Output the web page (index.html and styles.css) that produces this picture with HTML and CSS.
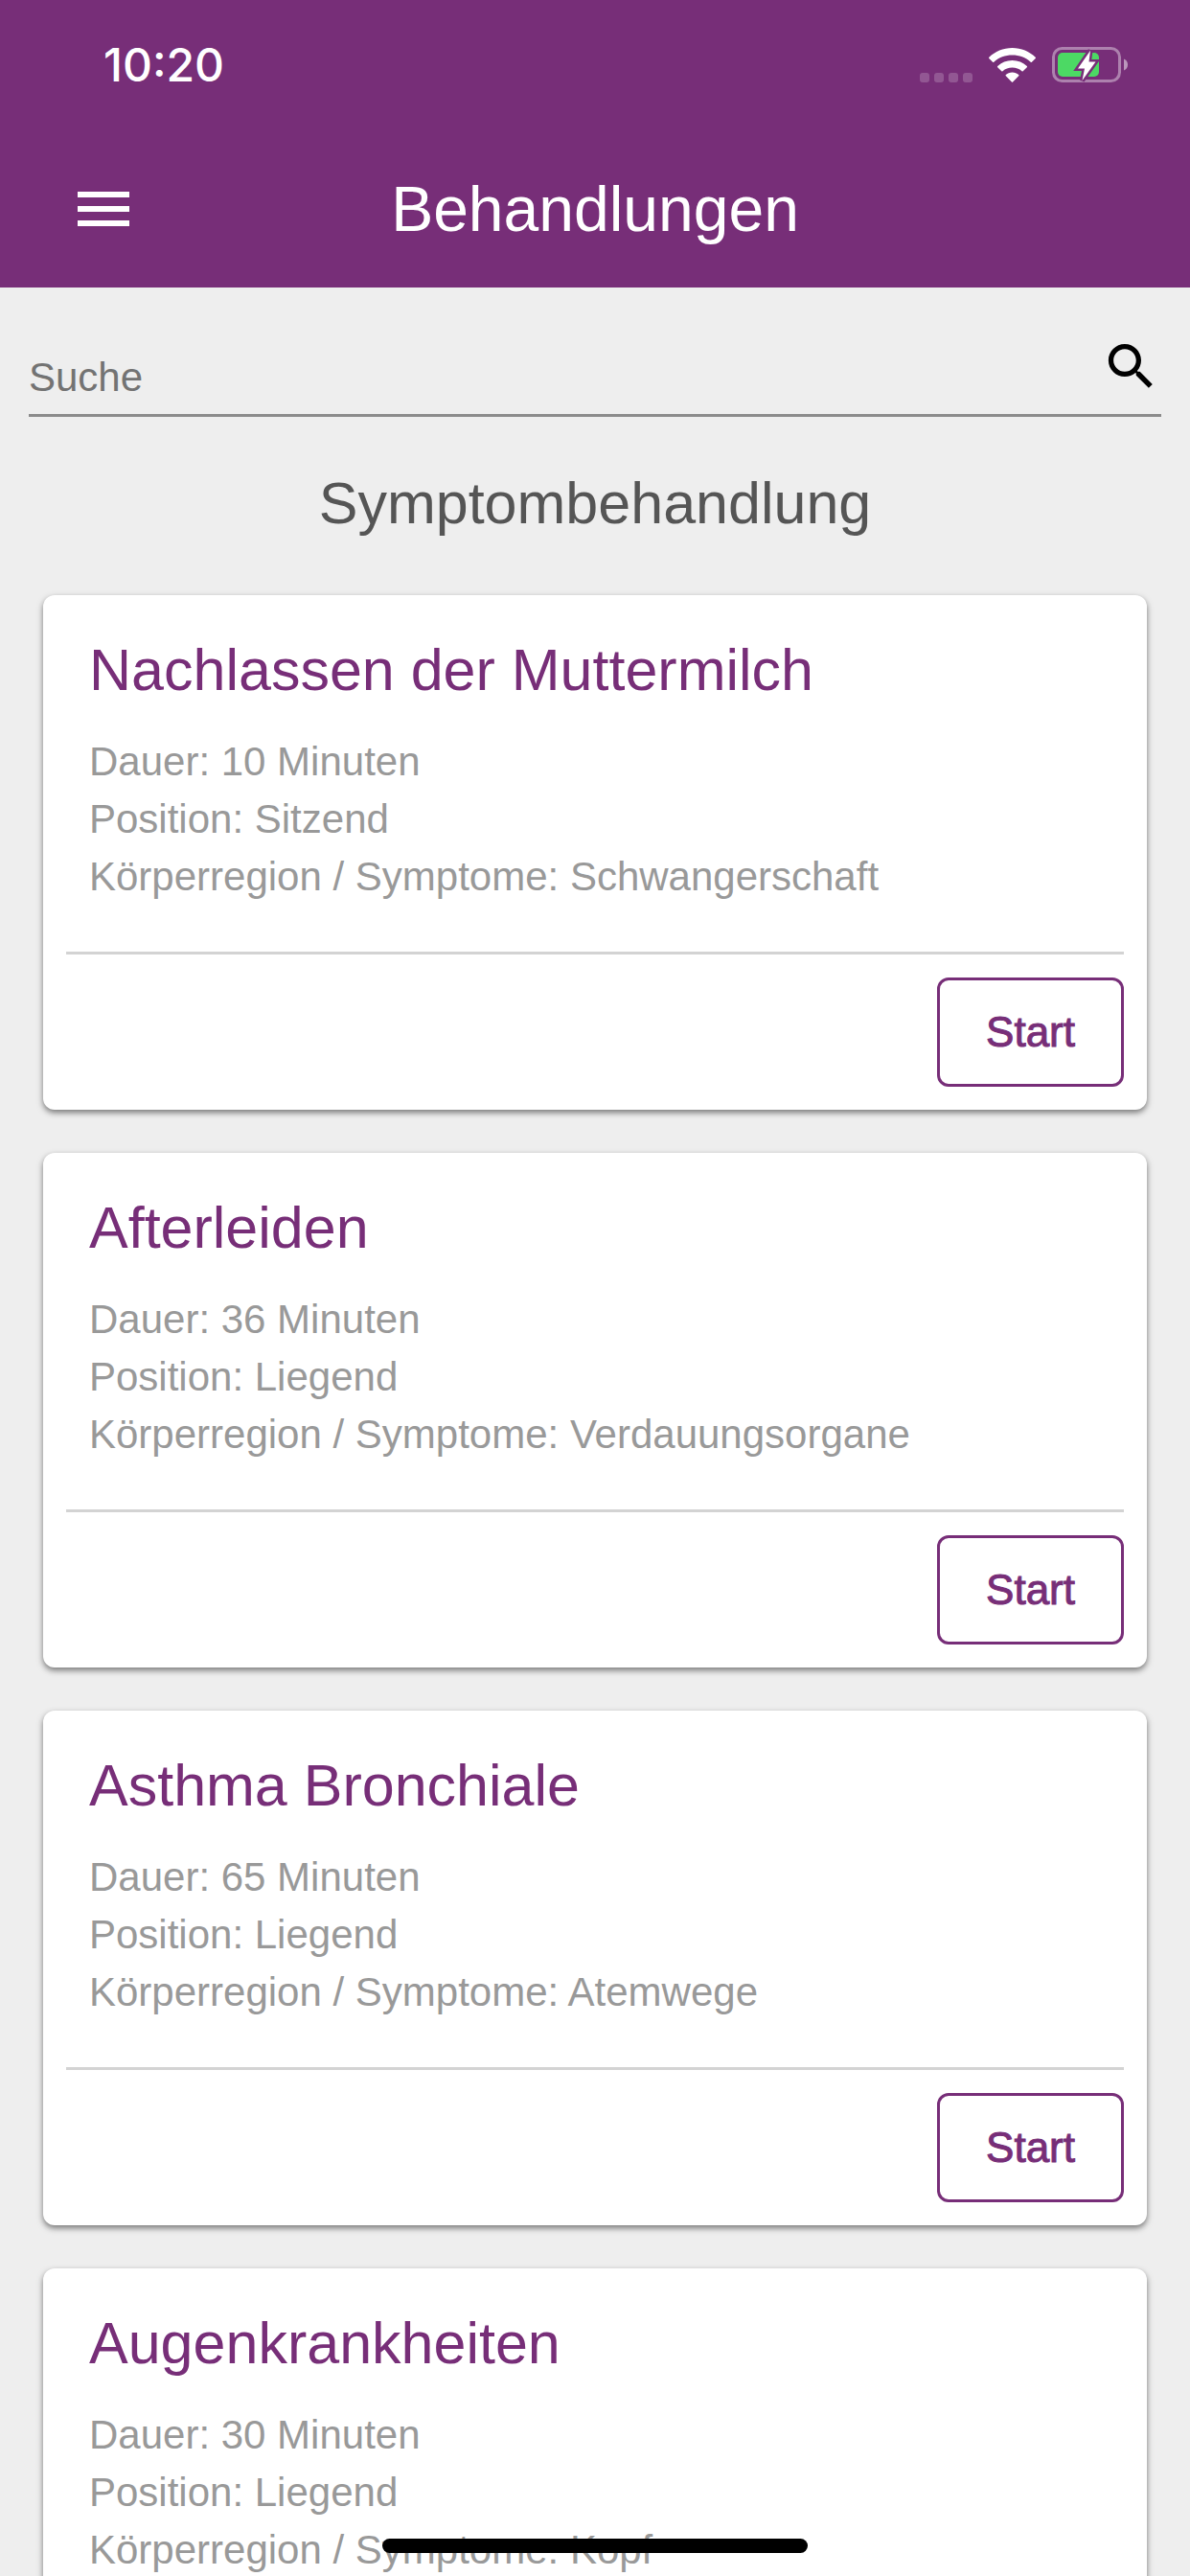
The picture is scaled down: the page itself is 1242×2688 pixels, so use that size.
FILE: index.html
```html
<!DOCTYPE html>
<html lang="de">

<head>
    <meta charset="UTF-8">
    <meta name="viewport" content="width=device-width, initial-scale=1.0">
    <title>Behandlungen</title>
    <link rel="stylesheet" href="styles.css">
</head>

<body>
    <div class="app">
        <header class="header">
            <div class="statusbar">
                <div class="time">10:20</div>
                <div class="status-icons">
                    <svg class="signal" width="55" height="36" viewBox="0 0 55 36" fill="#fff" fill-opacity="0.2">
                        <rect x="0" y="26" width="10" height="10" rx="3" />
                        <rect x="15" y="26" width="10" height="10" rx="3" />
                        <rect x="30" y="26" width="10" height="10" rx="3" />
                        <rect x="45" y="26" width="10" height="10" rx="3" />
                    </svg>
                    <svg class="wifi" width="49" height="36" viewBox="0 0 49 36" fill="#fff">
                        <path d="M24.500 0C33.900 0 42.400 3.700 48.700 9.700Q49.300 10.300 48.700 11L44.900 14.800Q44.300 15.400 43.700 14.800C38.500 10 31.900 7.600 24.500 7.600S10.500 10 5.300 14.800Q4.700 15.400 4.100 14.800L0.300 11Q-0.300 10.300 0.300 9.700C6.600 3.700 15.100 0 24.500 0Z" />
                        <path d="M24.500 13C30.500 13 35.800 15.200 39.800 19Q40.400 19.600 39.800 20.200L35.700 24.200Q35.100 24.800 34.500 24.200C31.800 21.800 28.400 20.500 24.500 20.500S17.200 21.800 14.500 24.200Q13.900 24.800 13.300 24.200L9.200 20.200Q8.600 19.600 9.200 19C13.200 15.200 18.500 13 24.500 13Z" />
                        <path d="M24.500 25.500C27.200 25.500 29.400 26.400 31.200 27.900Q31.900 28.500 31.200 29.200L25.100 35.400Q24.500 36 23.900 35.400L17.800 29.200Q17.100 28.500 17.800 27.900C19.600 26.400 21.800 25.500 24.500 25.500Z" />
                    </svg>
                    <svg class="battery" width="80" height="38" viewBox="0 0 80 38">
                        <rect x="1.500" y="1.500" width="69" height="34" rx="9" fill="none" stroke="#fff" stroke-opacity="0.4" stroke-width="3" />
                        <path d="M75 12.500C77.500 13.500 79 15.800 79 18.500S77.500 23.500 75 24.500Z" fill="#fff" fill-opacity="0.5" />
                        <rect x="6" y="6" width="43" height="25" rx="5" fill="#4cd964" />
                        <path d="M40 3.700L27 22.500H34L31.500 35L45.500 15.500H38.500Z" fill="#772e78" stroke="#772e78" stroke-width="5" />
                        <path d="M40 3.700L27 22.500H34L31.500 35L45.500 15.500H38.500Z" fill="#fff" />
                    </svg>
                </div>
            </div>
            <div class="toolbar">
                <button class="menu" type="button" aria-label="Menü">
                    <svg width="72" height="72" viewBox="0 0 24 24" fill="#fff">
                        <path d="M3 18h18v-2H3v2zm0-5h18v-2H3v2zm0-7v2h18V6H3z" />
                    </svg>
                </button>
                <h1>Behandlungen</h1>
            </div>
        </header>

        <main class="content">
            <form class="search" role="search">
                <input type="search" name="suche" placeholder="Suche" aria-label="Suche">
                <button class="search-btn" type="submit" aria-label="Suchen">
                    <svg width="63" height="63" viewBox="0 0 24 24">
                        <path d="M15.500 14h-.79l-.28-.27C15.410 12.590 16 11.110 16 9.500 16 5.910 13.090 3 9.500 3S3 5.910 3 9.500 5.910 16 9.500 16c1.610 0 3.090-.59 4.230-1.570l.27.28v.79l5 4.990L20.490 19l-4.990-5zm-6 0C7.010 14 5 11.990 5 9.500S7.010 5 9.500 5 14 7.010 14 9.500 11.990 14 9.500 14z" />
                    </svg>
                </button>
            </form>

            <h2>Symptombehandlung</h2>

            <div class="cards">
                <article class="card">
                    <div class="info">
                        <h3>Nachlassen der Muttermilch</h3>
                        <p>Dauer: 10 Minuten</p>
                        <p>Position: Sitzend</p>
                        <p>Körperregion / Symptome: Schwangerschaft</p>
                    </div>
                    <div class="actions">
                        <button class="start" type="button">Start</button>
                    </div>
                </article>

                <article class="card">
                    <div class="info">
                        <h3>Afterleiden</h3>
                        <p>Dauer: 36 Minuten</p>
                        <p>Position: Liegend</p>
                        <p>Körperregion / Symptome: Verdauungsorgane</p>
                    </div>
                    <div class="actions">
                        <button class="start" type="button">Start</button>
                    </div>
                </article>

                <article class="card">
                    <div class="info">
                        <h3>Asthma Bronchiale</h3>
                        <p>Dauer: 65 Minuten</p>
                        <p>Position: Liegend</p>
                        <p>Körperregion / Symptome: Atemwege</p>
                    </div>
                    <div class="actions">
                        <button class="start" type="button">Start</button>
                    </div>
                </article>

                <article class="card">
                    <div class="info">
                        <h3>Augenkrankheiten</h3>
                        <p>Dauer: 30 Minuten</p>
                        <p>Position: Liegend</p>
                        <p>Körperregion / Symptome: Kopf</p>
                    </div>
                    <div class="actions">
                        <button class="start" type="button">Start</button>
                    </div>
                </article>
            </div>
        </main>

        <div class="home-indicator"></div>
    </div>
</body>

</html>
```

FILE: styles.css
```css
* {
    box-sizing: border-box;
}

body {
    margin: 0;
    background-color: #eeeeee;
    font-family: 'Helvetica Neue', 'Liberation Sans', Arial, sans-serif;
    font-size: 42px;
}

h1,
h2,
h3,
p {
    margin: 0;
    font-weight: normal;
}

button {
    padding: 0;
    border: none;
    background: none;
    font-family: inherit;
    font-size: 44px;
    cursor: pointer;
}

svg {
    display: block;
}

.app {
    display: flex;
    flex-direction: column;
    height: 100vh;
    overflow: hidden;
}

/* header */
.header {
    flex: none;
    background-color: #772e78;
    color: white;
}

.statusbar {
    display: flex;
    justify-content: space-between;
    align-items: center;
    height: 135px;
    padding: 0 64px 0 108px;
}

.time {
    font-family: Inter, sans-serif;
    font-size: 48px;
    font-weight: 500;
}

.status-icons {
    display: flex;
    align-items: center;
    gap: 17px;
}

.toolbar {
    display: grid;
    grid-template-columns: 1fr auto 1fr;
    align-items: center;
    height: 165px;
    padding: 0 72px;
}

.menu {
    justify-self: start;
}

h1 {
    font-size: 66px;
}

/* scrolling area */
.content {
    flex: 1;
    overflow-y: auto;
    scrollbar-width: none;
}

.search {
    display: flex;
    align-items: flex-start;
    height: 84px;
    margin: 51px 30px 0;
    border-bottom: 3px solid #8b8b8b;
}

.search input {
    flex: 1;
    align-self: stretch;
    min-width: 0;
    padding: 4px 0 0;
    border: none;
    outline: none;
    background: none;
    color: #555555;
    font-family: inherit;
    font-size: 42px;
    appearance: none;
}

.search input::placeholder {
    color: #737373;
}

h2 {
    margin: 54px 0 60px;
    color: #555555;
    font-size: 61px;
    line-height: 72px;
    text-align: center;
}

.cards {
    display: flex;
    flex-direction: column;
    gap: 45px;
    padding: 0 45px 45px;
}

.card {
    border-radius: 12px;
    background-color: white;
    box-shadow: 0 3px 6px rgba(0, 0, 0, 0.5);
}

.info {
    padding: 42px 48px 48px;
    color: #999999;
    line-height: 60px;
}

h3 {
    margin-bottom: 30px;
    color: #772e78;
    font-size: 61px;
    line-height: 72px;
}

.actions {
    display: flex;
    justify-content: flex-end;
    margin: 0 24px;
    padding: 24px 0;
    border-top: 3px solid #d3d3d3;
}

/* the stroke gives a medium weight */
.start {
    height: 114px;
    padding: 0 48px;
    border: 3px solid #772e78;
    border-radius: 12px;
    color: #772e78;
    -webkit-text-stroke: 1px #772e78;
}

.home-indicator {
    position: fixed;
    bottom: 24px;
    left: 50%;
    width: 444px;
    height: 15px;
    margin-left: -222px;
    border-radius: 8px;
    background-color: black;
}
```
